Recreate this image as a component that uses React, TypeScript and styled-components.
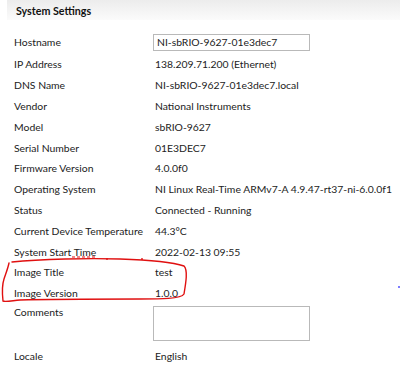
import React from "react";
import styled, { createGlobalStyle } from "styled-components";

const Global = createGlobalStyle`
  html, body { margin: 0; padding: 0; background: #ffffff; }
  body { font-family: Lato, "Noto Sans", sans-serif; color: #222; }
`;

const Page = styled.div`
  position: relative;
  width: 400px;
  height: 369px;
  overflow: hidden;
  background: #fff;
`;

const Header = styled.div`
  margin-left: 7px;
  height: 20px;
  display: flex;
  align-items: center;
  padding-left: 9px;
  background: linear-gradient(#ececec, #fbfbfb);
  font-weight: 700;
  font-size: 10.7px;
  color: #111;
`;

const Table = styled.div`
  display: grid;
  grid-template-columns: 141px 1fr;
  padding: 10px 0 0 14px;
  font-size: 10.4px;
`;

const Label = styled.div<{ $h?: number }>`
  height: ${(p) => p.$h ?? 20.8}px;
  display: flex;
  align-items: ${(p) => (p.$h && p.$h > 30 ? "flex-start" : "center")};
  padding-top: ${(p) => (p.$h && p.$h > 30 ? "2px" : "0")};
  box-sizing: border-box;
  white-space: nowrap;
`;

const Value = styled(Label)``;

const Input = styled.div`
  margin-left: -2px;
  width: 157px;
  height: 17px;
  box-sizing: border-box;
  border: 1px solid #b9b9b9;
  padding-left: 3px;
  display: flex;
  align-items: center;
`;

const TextArea = styled.div`
  margin-left: -2px;
  width: 157px;
  height: 35px;
  box-sizing: border-box;
  border: 1px solid #b9b9b9;
`;

const Ink = styled.svg`
  position: absolute;
  left: 0;
  top: 0;
  pointer-events: none;
`;

const rows: [string, string][] = [
  ["IP Address", "138.209.71.200 (Ethernet)"],
  ["DNS Name", "NI-sbRIO-9627-01e3dec7.local"],
  ["Vendor", "National Instruments"],
  ["Model", "sbRIO-9627"],
  ["Serial Number", "01E3DEC7"],
  ["Firmware Version", "4.0.0f0"],
  ["Operating System", "NI Linux Real-Time ARMv7-A 4.9.47-rt37-ni-6.0.0f1"],
  ["Status", "Connected - Running"],
  ["Current Device Temperature", "44.3°C"],
  ["System Start Time", "2022-02-13 09:55"],
  ["Image Title", "test"],
  ["Image Version", "1.0.0"],
];

export default function App() {
  return (
    <Page>
      <Global />
      <Header>System Settings</Header>
      <Table>
        <Label $h={24}>Hostname</Label>
        <Value $h={24}>
          <Input>NI-sbRIO-9627-01e3dec7</Input>
        </Value>
        {rows.map(([k, v]) => (
          <React.Fragment key={k}>
            <Label>{k}</Label>
            <Value>{v}</Value>
          </React.Fragment>
        ))}
        <Label $h={42}>Comments</Label>
        <Value $h={42}>
          <TextArea />
        </Value>
        <Label>Locale</Label>
        <Value>English</Value>
      </Table>
      <Ink width="400" height="369" viewBox="0 0 400 369">
        <path
          d="M12 262 C40 259 90 258 120 259 C150 260 172 262 184 266 C188 270 186 282 184 294 C181 299 160 299 140 299 C100 299 50 299 20 300 C10 301 5 302 3 301 C2 292 2 285 4 279 C6 273 8 268 9 263"
          fill="none"
          stroke="#e01010"
          strokeWidth="1.4"
          strokeLinecap="round"
        />
        <path d="M72 257 L95 257" stroke="#e01010" strokeWidth="1.2" strokeDasharray="3 2" />
        <circle cx="107" cy="259" r="0.9" fill="#e01010" />
        <circle cx="142" cy="259" r="0.9" fill="#e01010" />
        <rect x="398" y="286" width="2" height="2" fill="#7c7cff" />
      </Ink>
    </Page>
  );
}
